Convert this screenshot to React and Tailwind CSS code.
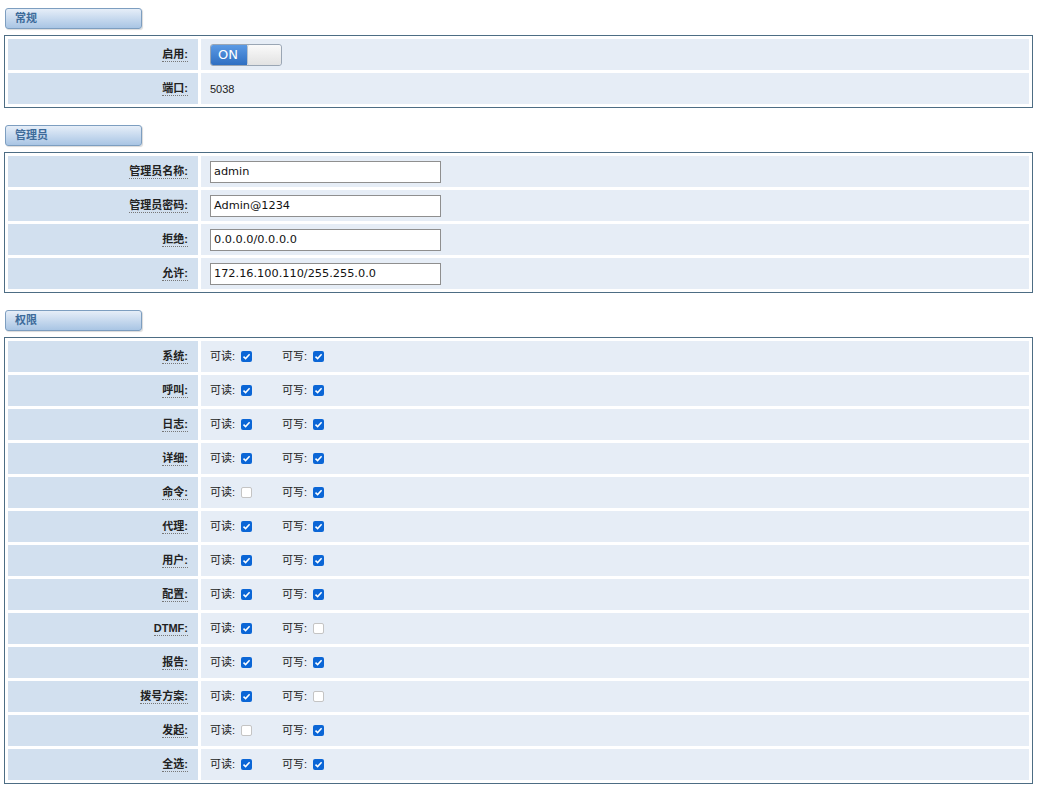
import React from 'react';

const CJK = '"Liberation Sans", "Noto Sans CJK SC", sans-serif';
const INPUT_FONT = '"DejaVu Sans", "Noto Sans CJK SC", sans-serif';

const SectionHead = ({ children, first }) => (
  <div
    className={`${first ? 'mt-[8px]' : 'mt-[17px]'} ml-[5px] w-[137px] h-[21px] rounded-[3px] border border-[#7d9ec0] bg-gradient-to-b from-[#e6eef8] to-[#a9c5e4] shadow-[1px_1px_1px_rgba(0,0,0,0.15)] pl-[9px] flex items-center text-[11px] font-bold text-[#3d6b9a]`}
    style={{ fontFamily: CJK }}
  >
    {children}
  </div>
);

const Box = ({ children }) => (
  <div className="mt-[6px] ml-[4px] w-[1029px] border border-[#4d6d84]">
    <table className="w-full border-separate border-spacing-[3px]">
      <tbody>{children}</tbody>
    </table>
  </div>
);

const Row = ({ label, children }) => (
  <tr className="h-[31px]">
    <td className="w-[190px] bg-[#d2e0ef] p-0 align-middle">
      <div className="flex justify-end items-center pr-[10px]">
        <span
          className="text-[11px] font-bold text-[#222] border-b border-dotted border-[#777] leading-[14px]"
          style={{ fontFamily: CJK }}
        >
          {label}:
        </span>
      </div>
    </td>
    <td className="bg-[#e6edf6] pl-[9px] p-0 align-middle">
      <div className="flex items-center">{children}</div>
    </td>
  </tr>
);

const Input = ({ value }) => (
  <div
    className="w-[231px] h-[22px] bg-white border border-[#8f8f8f] flex items-center pl-[3px] pt-[1px] text-[11.3px] text-[#111]"
    style={{ fontFamily: INPUT_FONT }}
  >
    {value}
  </div>
);

const Check = ({ on }) =>
  on ? (
    <span className="inline-flex w-[11px] h-[11px] rounded-[2px] bg-[#0b66d6] items-center justify-center">
      <svg width="9" height="9" viewBox="0 0 9 9">
        <path d="M1.5 4.6 L3.6 6.6 L7.6 2.2" fill="none" stroke="white" strokeWidth="1.5" />
      </svg>
    </span>
  ) : (
    <span className="inline-block w-[11px] h-[11px] rounded-[2px] bg-white border border-[#c4c4c4]" />
  );

const Perm = ({ label, r, w }) => (
  <Row label={label}>
    <div className="flex items-center text-[11px] text-[#222]" style={{ fontFamily: CJK }}>
      <span className="w-[31px]">可读:</span>
      <Check on={r} />
      <span className="ml-[30px] w-[31px]">可写:</span>
      <Check on={w} />
    </div>
  </Row>
);

const perms = [
  ['系统', true, true],
  ['呼叫', true, true],
  ['日志', true, true],
  ['详细', true, true],
  ['命令', false, true],
  ['代理', true, true],
  ['用户', true, true],
  ['配置', true, true],
  ['DTMF', true, false],
  ['报告', true, true],
  ['拨号方案', true, false],
  ['发起', false, true],
  ['全选', true, true],
];

export default function App() {
  return (
    <div className="w-[1044px] min-h-[797px] bg-white pb-[10px]">
      <SectionHead first>常规</SectionHead>
      <Box>
        <Row label="启用">
          <div className="flex w-[72px] h-[22px] rounded-[3px] border border-[#9aa6b4] overflow-hidden">
            <div
              className="w-[36px] bg-gradient-to-b from-[#5b9ae4] to-[#2f6fc2] text-white text-[13px] flex items-center pl-[7px]"
              style={{ fontFamily: INPUT_FONT }}
            >
              ON
            </div>
            <div className="flex-1 bg-gradient-to-b from-[#fafafa] to-[#e2e2e2] border-l border-[#b8c2cc] rounded-[2px]" />
          </div>
        </Row>
        <Row label="端口">
          <span className="text-[11px] leading-[14px] text-[#222]" style={{ fontFamily: CJK }}>5038</span>
        </Row>
      </Box>

      <SectionHead>管理员</SectionHead>
      <Box>
        <Row label="管理员名称"><Input value="admin" /></Row>
        <Row label="管理员密码"><Input value="Admin@1234" /></Row>
        <Row label="拒绝"><Input value="0.0.0.0/0.0.0.0" /></Row>
        <Row label="允许"><Input value="172.16.100.110/255.255.0.0" /></Row>
      </Box>

      <SectionHead>权限</SectionHead>
      <Box>
        {perms.map(([l, r, w]) => (
          <Perm key={l} label={l} r={r} w={w} />
        ))}
      </Box>
    </div>
  );
}
